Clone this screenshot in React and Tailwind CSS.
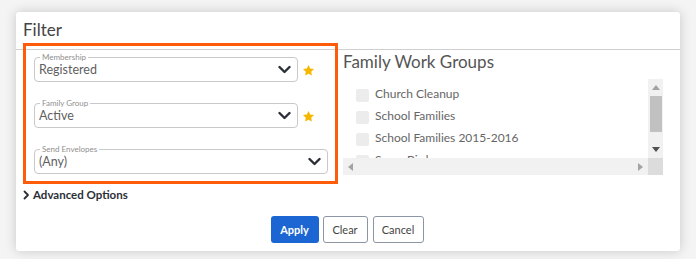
const fontStack = { fontFamily: "Lato, 'Open Sans', sans-serif" };

const Chevron = ({ className = "" }) => (
  <svg width="13" height="9" viewBox="0 0 13 9" className={className}>
    <path d="M1.5 2 L6.5 7 L11.5 2" fill="none" stroke="#2b2f36" strokeWidth="2.4" strokeLinecap="round" strokeLinejoin="round" />
  </svg>
);

const Star = () => (
  <svg width="13" height="13" viewBox="0 0 24 24">
    <path d="M12 1.8l3.1 6.5 7.1.9-5.2 4.9 1.3 7.1L12 17.8l-6.3 3.4 1.3-7.1-5.2-4.9 7.1-.9z" fill="#f5b800" />
  </svg>
);

const SelectBox = ({ label, value, width, star }) => (
  <div className="flex items-center">
    <div className={`relative h-[25px] ${width} rounded-[4px] border border-[#c9c9c9] flex items-center justify-between pl-[4px] pr-[6px]`}>
      <span className="absolute -top-[6px] left-[5px] bg-white px-[2px] text-[8px] leading-[10px] text-[#8f8f8f]">{label}</span>
      <span className="text-[12.5px] text-[#5f5f5f] mt-[2px]">{value}</span>
      <Chevron />
    </div>
    {star && (
      <div className="ml-[4px] mt-[2px]">
        <Star />
      </div>
    )}
  </div>
);

const groups = ["Church Cleanup", "School Families", "School Families 2015-2016", "Snow Birds"];

const Triangle = ({ dir }) => {
  const paths = {
    up: "M0 5 L4 0 L8 5 Z",
    down: "M0 0 L8 0 L4 5 Z",
    left: "M5 0 L5 8 L0 4 Z",
    right: "M0 0 L5 4 L0 8 Z",
  };
  const vertical = dir === "up" || dir === "down";
  return (
    <svg width={vertical ? 8 : 5} height={vertical ? 5 : 8} viewBox={vertical ? "0 0 8 5" : "0 0 5 8"}>
      <path d={paths[dir]} fill={dir === "down" ? "#505050" : "#a3a3a3"} />
    </svg>
  );
};

export default function App() {
  return (
    <div className="w-[696px] h-[259px] bg-[#f4f4f4] pt-[12px] pl-[16px] overflow-hidden" style={fontStack}>
      <div className="relative w-[664px] h-[239px] bg-white rounded-[3px] shadow-[0_0_12px_rgba(0,0,0,0.18)]">
        <div className="h-[38px] border-b border-[#cfcfcf] pl-[7px] pt-[8px] text-[17px] leading-[20px] text-[#444]">Filter</div>

        <div className="flex">
          <div className="w-[315px] pl-[18px] pt-[7px]">
            <div className="flex flex-col gap-[21px]">
              <SelectBox label="Membership" value="Registered" width="w-[264px]" star />
              <SelectBox label="Family Group" value="Active" width="w-[264px]" star />
              <SelectBox label="Send Envelopes" value="(Any)" width="w-[294px]" />
            </div>
          </div>

          <div className="ml-[12px] pt-[2px]">
            <div className="text-[17px] leading-[20px] text-[#555]">Family Work Groups</div>
            <div className="mt-[7px] w-[320px] h-[96px] flex flex-col">
              <div className="flex h-[79px]">
                <div className="flex-1 overflow-hidden pl-[13px] pt-[8px]">
                  {groups.map((g) => (
                    <div key={g} className="flex items-start h-[22px]">
                      <div className="w-[13px] h-[13px] mt-[2px] rounded-[2px] bg-[#ececec]" />
                      <span className="ml-[6px] text-[12px] leading-[13px] text-[#666] whitespace-nowrap">{g}</span>
                    </div>
                  ))}
                </div>
                <div className="w-[15px] bg-[#f1f1f1] flex flex-col items-center">
                  <div className="h-[17px] flex items-center justify-center"><Triangle dir="up" /></div>
                  <div className="w-[12px] h-[36px] bg-[#c1c1c1]" />
                  <div className="flex-1" />
                  <div className="h-[17px] flex items-center justify-center"><Triangle dir="down" /></div>
                </div>
              </div>
              <div className="flex h-[17px]">
                <div className="flex-1 bg-[#f1f1f1] flex items-center justify-between px-[5px]">
                  <Triangle dir="left" />
                  <Triangle dir="right" />
                </div>
                <div className="w-[15px] bg-[#dcdcdc]" />
              </div>
            </div>
          </div>
        </div>

        <div className="mt-[11px] pl-[7px] flex items-center gap-[3px] text-[11.5px] font-bold text-[#2b2f36]">
          <svg width="7" height="10" viewBox="0 0 7 10">
            <path d="M1.5 1.5 L5 5 L1.5 8.5" fill="none" stroke="#2b2f36" strokeWidth="1.8" strokeLinecap="round" strokeLinejoin="round" />
          </svg>
          <span>Advanced Options</span>
        </div>

        <div className="mt-[13px] flex justify-center pr-[2px]">
          <div className="flex gap-[4px]">
            <button className="w-[48px] h-[27px] rounded-[3px] bg-[#1b66d3] text-white text-[11px] font-bold">Apply</button>
            <button className="w-[45px] h-[27px] rounded-[3px] border border-[#8c95a3] bg-white text-[#444] text-[11px]">Clear</button>
            <button className="ml-[1px] w-[51px] h-[27px] rounded-[3px] border border-[#8c95a3] bg-white text-[#444] text-[11px]">Cancel</button>
          </div>
        </div>

        <div className="absolute left-[7px] top-[31px] w-[315px] h-[141px] border-[3px] border-[#ff5c0a]" />
      </div>
    </div>
  );
}
